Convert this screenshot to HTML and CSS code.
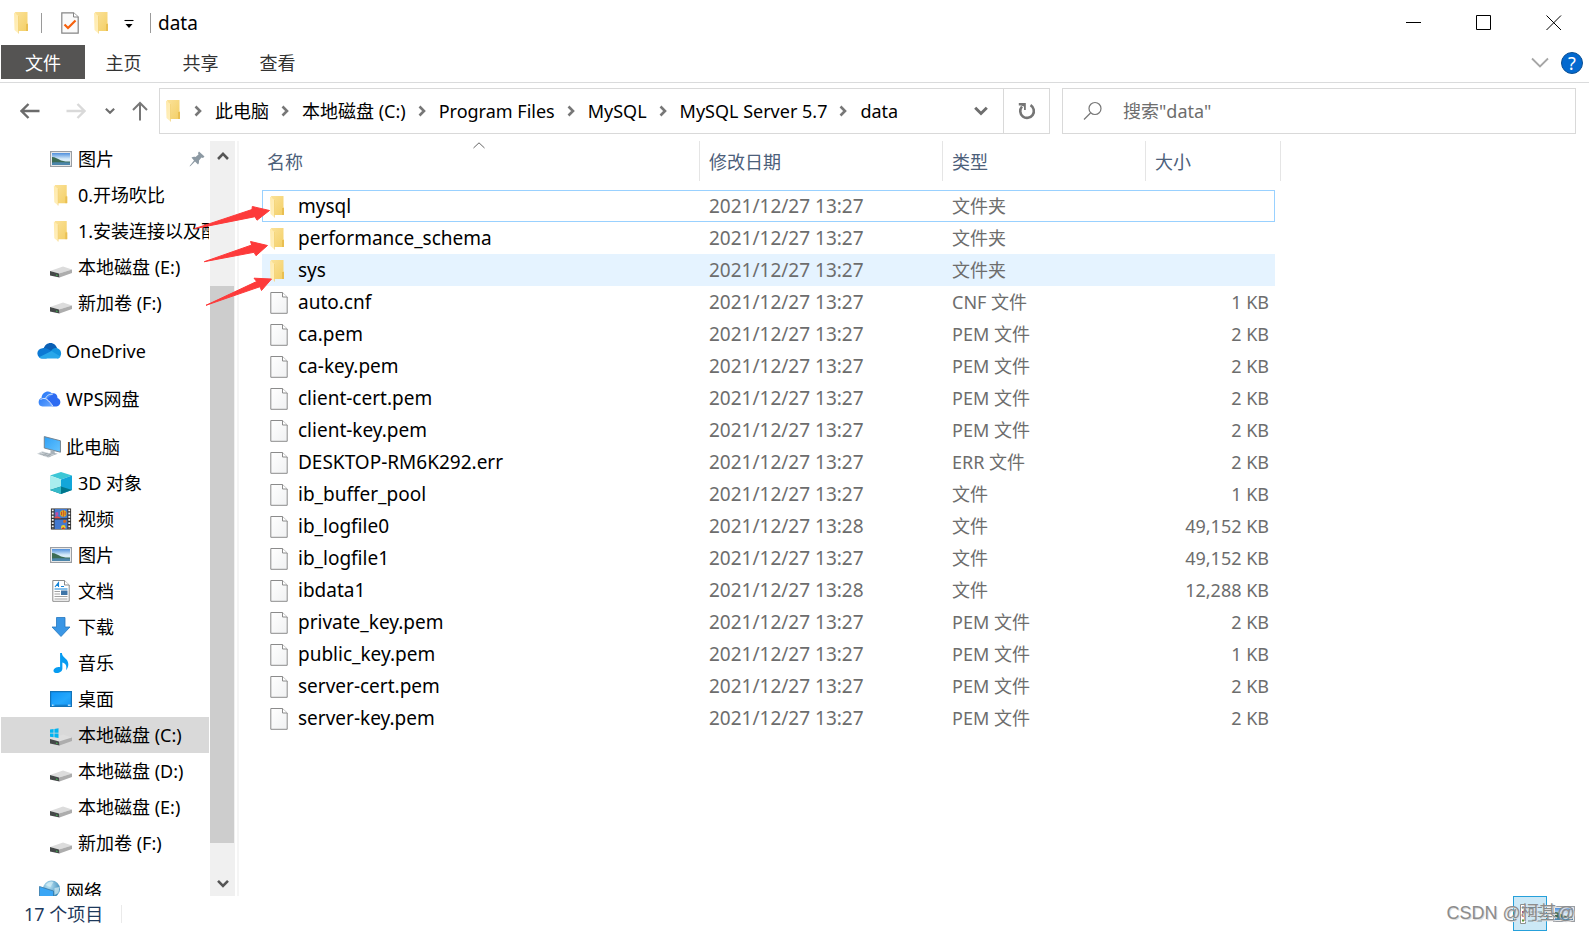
FILE: index.html
```html
<!DOCTYPE html>
<html lang="zh-CN">
<head>
<meta charset="utf-8">
<title>data</title>
<link rel="stylesheet" href="styles.css">
</head>
<body>
<svg class="defs" aria-hidden="true">
  <defs>
    <linearGradient id="gFolder" x1="0" x2="1" y1="0" y2="1"><stop offset="0" stop-color="#fbe299"/><stop offset="1" stop-color="#f3cf66"/></linearGradient>
    <linearGradient id="gFlap" x1="0" x2="1" y1="0" y2="1"><stop offset="0" stop-color="#ffe9a9"/><stop offset="1" stop-color="#fff0bf"/></linearGradient>
    <linearGradient id="gPage" x1="0" x2="1" y1="0" y2="1"><stop offset="0" stop-color="#ffffff"/><stop offset="1" stop-color="#f0f1f2"/></linearGradient>
    <linearGradient id="gSky" x1="0" x2="0" y1="0" y2="1"><stop offset="0" stop-color="#4f8fdc"/><stop offset="0.500" stop-color="#d8ecfa"/></linearGradient>
    <linearGradient id="gScreen" x1="0" x2="1" y1="0" y2="1"><stop offset="0" stop-color="#2ea0f5"/><stop offset="1" stop-color="#66c4ff"/></linearGradient>
    <linearGradient id="gDesk" x1="0" x2="1" y1="0" y2="1"><stop offset="0" stop-color="#0f93f7"/><stop offset="0.6" stop-color="#25a8fd"/><stop offset="1" stop-color="#1592f0"/></linearGradient>
    <linearGradient id="gWps" x1="0" x2="1" y1="0" y2="1"><stop offset="0" stop-color="#1a6ff5"/><stop offset="1" stop-color="#6aa8ff"/></linearGradient>
    <radialGradient id="gGlobe" cx="0.35" cy="0.3" r="0.8"><stop offset="0" stop-color="#bfe6f7"/><stop offset="1" stop-color="#2b7fb0"/></radialGradient>
  </defs>
  <symbol id="folder" viewBox="0 0 15 22">
    <path d="M1 0H13.500V11L14 12V19H4Z" fill="url(#gFolder)"/>
    <path d="M12 12h2v7h-2z" fill="#e9bf52"/>
    <path d="M0 0.500L4.500 4V21.500L0.500 18Z" fill="url(#gFlap)"/>
    <path d="M4.500 4V21.500" stroke="#f0cb67" stroke-width="0.600"/>
  </symbol>
  <symbol id="page" viewBox="0 0 18 22">
    <path d="M0.800 0.500H12.500L17.200 5V21.300H0.800Z" fill="url(#gPage)" stroke="#8b8b8b" stroke-width="1"/>
    <path d="M12.500 0.500V5H17.200" fill="#fff" stroke="#8b8b8b" stroke-width="1"/>
  </symbol>
  <symbol id="check" viewBox="0 0 18 22">
    <path d="M0.800 0.800H12.500L17.200 5V21.200H0.800Z" fill="#fafafa" stroke="#858585" stroke-width="1.200"/>
    <path d="M12.500 0.800V5H17.200" fill="#fff" stroke="#858585"/>
    <path d="M3.500 12.500L7 16L14.500 8.500" fill="none" stroke="#f5600c" stroke-width="2.200"/>
  </symbol>
  <symbol id="picture" viewBox="0 0 22 16">
    <path d="M0.600 0.600H21.400V15.400H0.600Z" fill="#fff" stroke="#9a9ea3" stroke-width="1.200"/>
    <path d="M2 2H20V14H2Z" fill="url(#gSky)"/>
    <path d="M2 6C5 6 8 8 11 9.500C14 10.500 17 10.500 20 10.500V12H2Z" fill="#3c6c55"/>
    <path d="M2 11.500C8 11 14 11.500 20 11.500V14H2Z" fill="#4c86ab"/>
  </symbol>
  <symbol id="drive" viewBox="0 0 22 12">
    <path d="M0 5L13 0.500L22 3.500L9 7.500Z" fill="#dcdcdc"/>
    <path d="M9 7.500L22 3.500V7L9.500 11.500Z" fill="#adadad"/>
    <path d="M0 5L9 7.500L9.500 11.500L0 9.500Z" fill="#444848"/>
    <path d="M6 8.500l1.500 0.400v1L6 9.500z" fill="#43c653"/>
  </symbol>
  <symbol id="cdrive" viewBox="0 0 22 18">
    <path d="M0 11L13 6.500L22 9.500L9 13.500Z" fill="#dedede"/>
    <path d="M9 13.500L22 9.500V13L9.500 17.500Z" fill="#adadad"/>
    <path d="M0 11L9 13.500L9.500 17.500L0 15.500Z" fill="#444848"/>
    <path d="M6 14.500l1.500 0.400v1L6 15.500z" fill="#43c653"/>
    <path d="M0 1.500L3.600 1V4.700H0ZM4.400 0.900L8.500 0.300V4.700H4.400ZM0 5.500H3.600V9.200L0 8.700ZM4.400 5.500H8.500V9.900L4.400 9.300Z" fill="#00b3f0"/>
  </symbol>
  <symbol id="onedrive" viewBox="0 0 24 16">
    <path d="M6 6C7 2 10 0 13 0C16.500 0 18.500 2.500 19.500 5L13 9Z" fill="#0a5fb4"/>
    <path d="M5 15.500A5 5 0 0 1 5 5.200C8 4.300 11 6 14 8L9 15.500Z" fill="#0c79d4"/>
    <path d="M13.500 8C15 5 18 4.500 20 5.300C24.500 7 25 13 20.500 15.500L12 12Z" fill="#1493df"/>
    <path d="M1.500 14.200L14 8L23 13.500C22 15 21 15.500 20 15.500H5C3.500 15.500 2.500 15.200 1.500 14.200Z" fill="#29a7ea"/>
  </symbol>
  <symbol id="wps" viewBox="0 0 24 16">
    <path d="M9 8L13 3C17 1 20 3.500 20 7C24 8 24 15 19 15.500H15Z" fill="#2d6bf2"/>
    <path d="M5 15.500C0 15.500 0 8 4 7C4.500 0 13 -1.500 15 3.500L9 8L15 15.500Z" fill="url(#gWps)"/>
    <path d="M3 8.500C8 5.500 11 9 15.500 15.300M8 7.500C9.500 4 12 3 15 3.500" fill="none" stroke="#e6f0ff" stroke-width="0.900"/>
  </symbol>
  <symbol id="pc" viewBox="0 0 24 21">
    <path d="M7 0.500L22.500 4.500V15.500L7 11.500Z" fill="url(#gScreen)" stroke="#70808c" stroke-width="0.900"/>
    <path d="M13 13.300l4 1v2l3 0.700-4 1.500-6-1.500 3-1z" fill="#a8b2ba"/>
    <path d="M0 17L5 14.500L17 18L11 20.800Z" fill="#d0d6da"/>
    <path d="M2.500 17L13 19.600M5 15.800L15 18.500M6 18.700l4-2M9.500 19.600l4-2" stroke="#8f999f" stroke-width="0.600"/>
  </symbol>
  <symbol id="cube" viewBox="0 0 22 22">
    <path d="M0 3.500L11 0L22 3.500L11 7.500Z" fill="#3cc7d6"/>
    <path d="M0 3.500L11 7.500V22L0 18Z" fill="#a9eeee"/>
    <path d="M11 7.500L22 3.500V18L11 22Z" fill="#12a6d9"/>
    <path d="M0 18L11 14.500L22 18L11 22Z" fill="#00778c"/>
    <path d="M0 18L11 14.500V22Z" fill="#35bac9"/>
  </symbol>
  <symbol id="video" viewBox="0 0 22 24">
    <path d="M0 0.500H22V23.500H0Z" fill="#303030"/>
    <path d="M4 1H18V11.300H4ZM4 12.500H18V23H4Z" fill="#4379cf"/>
    <path d="M2 1.500V23M20 1.500V23" stroke="#f4f4f4" stroke-width="2" stroke-dasharray="2 1.500"/>
    <path d="M5 4.500h3v3l-1.500 1.500-1.500-1.500z" fill="#c04ca0"/>
    <circle cx="13.500" cy="6" r="3.500" fill="#e0bf22"/><path d="M13.500 2.500v7M11.500 4v4M15.500 4v4" stroke="#c72c24" stroke-width="0.900"/>
    <path d="M4 9.500q4-1.500 7 1.800H4z" fill="#e84942"/><circle cx="15" cy="14.500" r="1.800" fill="#d26a20"/>
    <circle cx="13.500" cy="21" r="2.500" fill="#edce2b"/><path d="M11.500 23q2-4 4 0z" fill="#c83427"/>
  </symbol>
  <symbol id="doc" viewBox="0 0 18 22">
    <path d="M0.800 0.500H12.500L17.200 5V21.300H0.800Z" fill="#fff" stroke="#8b8b8b"/>
    <path d="M12.500 0.500V5H17.200" fill="#fff" stroke="#8b8b8b"/>
    <path d="M3 7L6.500 2.500V7M4 5.500H7M9 6.500H12M2.500 9H15.500" fill="none" stroke="#1383d8" stroke-width="1.100"/>
    <path d="M2.500 11.500H8M2.500 14H8M2.500 16.500H15.500M2.500 19H15.500" stroke="#a2a2a2"/>
    <path d="M9 10.500h6.500v4.500H9z" fill="#3e75a8"/>
  </symbol>
  <symbol id="down" viewBox="0 0 20 20"><path d="M5.500 0.500H14V10H19L10 19.500L1 10H5.500Z" fill="#3a96e5" stroke="#2377bf" stroke-width="0.800"/></symbol>
  <symbol id="music" viewBox="0 0 18 24"><path d="M8 1H10C10 6 17 7 17 13C17 16 16 18 14.500 20C16 14 13 12 10.500 11.500V18C10.500 21 7.500 23 4.500 23C1 23 0 20.500 1.500 18.500C3 16.500 6 15.800 8 16.500Z" fill="#079cf1"/></symbol>
  <symbol id="desk" viewBox="0 0 22 16"><path d="M0.600 0.600H21.400V15.400H0.600Z" fill="url(#gDesk)" stroke="#1373b9" stroke-width="1.200"/><path d="M2 14.200h1.500M18 14.200h2.500" stroke="#fff"/><path d="M5 14.200h12" stroke="#0d5fa0" stroke-width="0.600"/></symbol>
  <symbol id="net" viewBox="0 0 24 22">
    <circle cx="14" cy="9" r="8.500" fill="url(#gGlobe)"/><path d="M8 5q4-5 8-3l-3 5zM17 8l5-1-1 6-4 2z" fill="#d6eff5" opacity="0.700"/>
    <path d="M2 6.500L16 11V21L2 17Z" fill="#3aa6f5" stroke="#3377a6" stroke-width="0.800"/>
  </symbol>
  <symbol id="pin" viewBox="0 0 16 16"><path d="M10 0.500L15.500 5.500L14 7L12.500 6.500L10 9.500C10 11.500 10 12.500 9 13.500L6 10.500L1.500 15L0.500 15.500L1 14.500L5 9.500L2.500 6.500C4 5.500 5.500 5.500 6.500 6L9.500 3.500L9 2Z" fill="#8c99a3"/></symbol>
  <symbol id="chevR" viewBox="0 0 8 12"><path d="M1.500 1.500L6 6L1.500 10.500" fill="none" stroke="#777" stroke-width="2.600"/></symbol>
  <symbol id="chevD" viewBox="0 0 14 10"><path d="M1.200 1.800L7 7.500L12.800 1.800" fill="none" stroke="#6e6e6e" stroke-width="3"/></symbol>
</svg>

<div class="window">
  <header class="titlebar">
    <svg class="i-folder"><use href="#folder"/></svg>
    <span class="sep sep-a"></span>
    <button class="plain" aria-label="属性"><svg class="i-page"><use href="#check"/></svg></button>
    <button class="plain qa-folder" aria-label="新建文件夹"><svg class="i-folder"><use href="#folder"/></svg></button>
    <button class="plain qa-more" aria-label="自定义快速访问工具栏"><svg width="10" height="13" viewBox="0 0 10 13"><path d="M0.500 4.500H9.500" stroke="#000" stroke-width="1.100"/><path d="M1.500 8H8.500L5 12Z"/></svg></button>
    <span class="sep sep-b"></span>
    <h1 class="title">data</h1>
    <div class="winbtns">
      <button aria-label="最小化"><svg width="16" height="16"><path d="M0 7.500H15" stroke="#000"/></svg></button>
      <button aria-label="最大化"><svg width="16" height="16"><path d="M0.500 0.500H14.500V14.500H0.500Z" fill="none" stroke="#000"/></svg></button>
      <button aria-label="关闭"><svg width="16" height="16"><path d="M0.500 0.500L15 15M15 0.500L0.500 15" stroke="#000"/></svg></button>
    </div>
  </header>

  <div class="ribbon">
    <button class="tab tab-file">文件</button>
    <button class="tab">主页</button>
    <button class="tab">共享</button>
    <button class="tab">查看</button>
    <div class="ribbon-end">
      <button class="plain" aria-label="展开功能区"><svg width="18" height="12" viewBox="0 0 18 12"><path d="M1 1.500L9 9.500L17 1.500" fill="none" stroke="#a6a6a6" stroke-width="1.800"/></svg></button>
      <button class="help" aria-label="帮助">?</button>
    </div>
  </div>

  <div class="navrow">
    <div class="navbtns">
      <button class="plain" aria-label="后退"><svg width="20" height="16"><path d="M19.500 8H2M8.500 1L1.500 8L8.500 15" fill="none" stroke="#6b6b6b" stroke-width="2.400"/></svg></button>
      <button class="plain nb-fwd" aria-label="前进"><svg width="20" height="16"><path d="M0.500 8H18M11.500 1L18.500 8L11.500 15" fill="none" stroke="#d9d9d9" stroke-width="2.400"/></svg></button>
      <button class="plain nb-hist" aria-label="最近浏览的位置"><svg width="10" height="8" viewBox="0 0 14 10"><use href="#chevD"/></svg></button>
      <button class="plain nb-up" aria-label="上移"><svg width="16" height="20"><path d="M8 19.500V2M1 9L8 2L15 9" fill="none" stroke="#777" stroke-width="2"/></svg></button>
    </div>
    <div class="address">
      <svg class="i-folder"><use href="#folder"/></svg>
      <svg class="crumb-sep first"><use href="#chevR"/></svg><a href="#" class="crumb">此电脑</a>
      <svg class="crumb-sep"><use href="#chevR"/></svg><a href="#" class="crumb">本地磁盘 (C:)</a>
      <svg class="crumb-sep"><use href="#chevR"/></svg><a href="#" class="crumb">Program Files</a>
      <svg class="crumb-sep"><use href="#chevR"/></svg><a href="#" class="crumb">MySQL</a>
      <svg class="crumb-sep"><use href="#chevR"/></svg><a href="#" class="crumb">MySQL Server 5.7</a>
      <svg class="crumb-sep"><use href="#chevR"/></svg><a href="#" class="crumb">data</a>
      <button class="plain addr-drop" aria-label="以前的位置"><svg width="14" height="10"><use href="#chevD"/></svg></button>
      <button class="refresh" aria-label="刷新"><svg width="18" height="18" viewBox="0 0 18 18"><path d="M12.500 3.200A6.800 6.800 0 1 1 4 4.500" fill="none" stroke="#757575" stroke-width="2.600"/><path d="M0.800 1H7.800V8H6V4.500L3 3.500H0.800Z" fill="#757575"/></svg></button>
    </div>
    <label class="search">
      <svg width="20" height="20"><circle cx="12" cy="7.500" r="6" fill="none" stroke="#777" stroke-width="1.200"/><path d="M7.500 12L1 18.500" stroke="#777" stroke-width="1.300"/></svg>
      <input type="text" aria-label="搜索" placeholder='搜索"data"'>
    </label>
  </div>

  <div class="body">
    <nav class="side">
      <ul class="tree">
        <li><a href="#" class="sub"><svg class="t-pic"><use href="#picture"/></svg>图片<svg class="pin"><use href="#pin"/></svg></a></li>
        <li><a href="#" class="sub"><svg class="t-folder"><use href="#folder"/></svg>0.开场吹比</a></li>
        <li><a href="#" class="sub"><svg class="t-folder"><use href="#folder"/></svg>1.安装连接以及配置</a></li>
        <li><a href="#" class="sub"><svg class="t-drive"><use href="#drive"/></svg>本地磁盘 (E:)</a></li>
        <li><a href="#" class="sub"><svg class="t-drive"><use href="#drive"/></svg>新加卷 (F:)</a></li>
        <li class="group"><a href="#"><svg class="t-cloud"><use href="#onedrive"/></svg>OneDrive</a></li>
        <li class="group"><a href="#"><svg class="t-cloud"><use href="#wps"/></svg>WPS网盘</a></li>
        <li class="group"><a href="#"><svg class="t-pc"><use href="#pc"/></svg>此电脑</a></li>
        <li><a href="#" class="sub"><svg class="t-sq"><use href="#cube"/></svg>3D 对象</a></li>
        <li><a href="#" class="sub"><svg class="t-sq"><use href="#video"/></svg>视频</a></li>
        <li><a href="#" class="sub"><svg class="t-pic"><use href="#picture"/></svg>图片</a></li>
        <li><a href="#" class="sub"><svg class="t-sq"><use href="#doc"/></svg>文档</a></li>
        <li><a href="#" class="sub"><svg class="t-down"><use href="#down"/></svg>下载</a></li>
        <li><a href="#" class="sub"><svg class="t-sq"><use href="#music"/></svg>音乐</a></li>
        <li><a href="#" class="sub"><svg class="t-pic"><use href="#desk"/></svg>桌面</a></li>
        <li><a href="#" class="sub current"><svg class="t-cdrive"><use href="#cdrive"/></svg>本地磁盘 (C:)</a></li>
        <li><a href="#" class="sub"><svg class="t-drive"><use href="#drive"/></svg>本地磁盘 (D:)</a></li>
        <li><a href="#" class="sub"><svg class="t-drive"><use href="#drive"/></svg>本地磁盘 (E:)</a></li>
        <li><a href="#" class="sub"><svg class="t-drive"><use href="#drive"/></svg>新加卷 (F:)</a></li>
        <li class="group"><a href="#"><svg class="t-pc"><use href="#net"/></svg>网络</a></li>
      </ul>
      <div class="scroll">
        <button aria-label="向上滚动"><svg width="12" height="10" viewBox="0 0 14 11"><path d="M1.200 9L7 3L12.800 9" fill="none" stroke="#555" stroke-width="3"/></svg></button>
        <div class="track"><div class="thumb"></div></div>
        <button aria-label="向下滚动"><svg width="12" height="10" viewBox="0 0 14 11"><path d="M1.200 3L7 9L12.800 3" fill="none" stroke="#555" stroke-width="3"/></svg></button>
      </div>
    </nav>

    <main class="files">
      <table class="list">
        <colgroup><col class="c-name"><col class="c-date"><col class="c-type"><col class="c-size"><col class="c-end"></colgroup>
        <thead><tr>
          <th scope="col"><button class="colhead">名称<svg class="sort" width="12" height="7"><path d="M0.500 6L6 0.800L11.500 6" fill="none" stroke="#666"/></svg></button></th>
          <th scope="col"><button class="colhead">修改日期</button></th>
          <th scope="col"><button class="colhead">类型</button></th>
          <th scope="col" colspan="2"><button class="colhead">大小</button></th>
        </tr></thead>
        <tbody>
          <tr class="focused"><td><svg class="f-folder"><use href="#folder"/></svg>mysql</td><td class="num">2021/12/27 13:27</td><td>文件夹</td><td></td></tr>
          <tr><td><svg class="f-folder"><use href="#folder"/></svg>performance_schema</td><td class="num">2021/12/27 13:27</td><td>文件夹</td><td></td></tr>
          <tr class="hover"><td><svg class="f-folder"><use href="#folder"/></svg>sys</td><td class="num">2021/12/27 13:27</td><td>文件夹</td><td></td></tr>
          <tr><td><svg class="f-page"><use href="#page"/></svg>auto.cnf</td><td class="num">2021/12/27 13:27</td><td>CNF 文件</td><td>1 KB</td></tr>
          <tr><td><svg class="f-page"><use href="#page"/></svg>ca.pem</td><td class="num">2021/12/27 13:27</td><td>PEM 文件</td><td>2 KB</td></tr>
          <tr><td><svg class="f-page"><use href="#page"/></svg>ca-key.pem</td><td class="num">2021/12/27 13:27</td><td>PEM 文件</td><td>2 KB</td></tr>
          <tr><td><svg class="f-page"><use href="#page"/></svg>client-cert.pem</td><td class="num">2021/12/27 13:27</td><td>PEM 文件</td><td>2 KB</td></tr>
          <tr><td><svg class="f-page"><use href="#page"/></svg>client-key.pem</td><td class="num">2021/12/27 13:27</td><td>PEM 文件</td><td>2 KB</td></tr>
          <tr><td><svg class="f-page"><use href="#page"/></svg>DESKTOP-RM6K292.err</td><td class="num">2021/12/27 13:27</td><td>ERR 文件</td><td>2 KB</td></tr>
          <tr><td><svg class="f-page"><use href="#page"/></svg>ib_buffer_pool</td><td class="num">2021/12/27 13:27</td><td>文件</td><td>1 KB</td></tr>
          <tr><td><svg class="f-page"><use href="#page"/></svg>ib_logfile0</td><td class="num">2021/12/27 13:28</td><td>文件</td><td>49,152 KB</td></tr>
          <tr><td><svg class="f-page"><use href="#page"/></svg>ib_logfile1</td><td class="num">2021/12/27 13:27</td><td>文件</td><td>49,152 KB</td></tr>
          <tr><td><svg class="f-page"><use href="#page"/></svg>ibdata1</td><td class="num">2021/12/27 13:28</td><td>文件</td><td>12,288 KB</td></tr>
          <tr><td><svg class="f-page"><use href="#page"/></svg>private_key.pem</td><td class="num">2021/12/27 13:27</td><td>PEM 文件</td><td>2 KB</td></tr>
          <tr><td><svg class="f-page"><use href="#page"/></svg>public_key.pem</td><td class="num">2021/12/27 13:27</td><td>PEM 文件</td><td>1 KB</td></tr>
          <tr><td><svg class="f-page"><use href="#page"/></svg>server-cert.pem</td><td class="num">2021/12/27 13:27</td><td>PEM 文件</td><td>2 KB</td></tr>
          <tr><td><svg class="f-page"><use href="#page"/></svg>server-key.pem</td><td class="num">2021/12/27 13:27</td><td>PEM 文件</td><td>2 KB</td></tr>
        </tbody>
      </table>
    </main>

    <svg class="arrows" width="90" height="120" viewBox="190 200 90 120" aria-hidden="true">
      <g fill="#fd3a3a" stroke="#fd3a3a" stroke-width="1" stroke-linejoin="round">
        <path d="M194.500 228.700L252 209.500L252.300 206.500L269.500 210.500L257 220.200L255 216.700Z"/>
        <path d="M204.300 261.700L251.700 245L250.500 241.500L267.500 245.500L256 255.700L254 252.300Z"/>
        <path d="M206 305.300L256.700 281.500L254 278.200L271.500 279L261.500 290.500L260 286.700Z"/>
      </g>
    </svg>
  </div>

  <footer class="status">
    <span class="count">17 个项目</span>
    <div class="views">
      <button class="view on" aria-label="详细信息"><svg width="32" height="22" viewBox="0 0 32 22"><path d="M6.500 1.500h5v19h-5z" fill="#fff" stroke="#8d8d8d"/><path d="M8 3.500h2v2H8z" fill="#4778b6"/><path d="M8 8h2v2H8z" fill="#a84e72"/><path d="M8 12h2v2H8z" fill="#cf3030"/><path d="M8 16.500h2v2H8z" fill="#56952f"/><path d="M14 4.500h14M14 9h14M14 13.500h14M14 18h14" stroke="#7d8990"/></svg></button>
      <button class="view" aria-label="大图标"><svg width="22" height="16"><use href="#picture"/></svg></button>
    </div>
    <span class="mark">CSDN @柯基@</span>
  </footer>
</div>
</body>
</html>
```
FILE: styles.css
```css
* { box-sizing: border-box; }

body {
  margin: 0;
  background: #fff;
  color: #000;
  font: 18px/24px "Noto Sans", "Noto Sans CJK SC", sans-serif;
}

button, input { font: inherit; color: inherit; }
button { padding: 0; border: 0; background: none; }
a { color: inherit; text-decoration: none; }
svg { display: block; flex: none; }

.defs { position: absolute; width: 0; height: 0; }
.plain { display: flex; align-items: center; justify-content: center; }

.window { display: flex; flex-direction: column; height: 100vh; }

.i-folder { width: 15px; height: 22px; }
.i-page { width: 18px; height: 22px; }

/* title bar */
.titlebar { display: flex; align-items: center; height: 45px; padding-left: 14px; }
.sep { width: 1px; height: 20px; background: #9a9a9a; }
.sep-a { margin: 0 19px 0 12px; }
.qa-folder { margin-left: 15px; }
.qa-more { margin-left: 15px; }
.sep-b { margin: 0 7px 0 16px; }
.title { margin: 0; font-size: 19px; font-weight: 400; }
.winbtns { display: flex; margin-left: auto; }
.winbtns button { display: flex; align-items: center; justify-content: center; width: 70px; height: 45px; }

/* ribbon */
.ribbon { display: flex; align-items: flex-start; height: 38px; padding-left: 1px; border-bottom: 1px solid #dadbdc; }
.tab { width: 77px; height: 34px; padding-top: 1px; color: #333; }
.tab-file { width: 84px; background: #555453; color: #fff; }
.ribbon-end { display: flex; align-items: center; gap: 12px; height: 36px; margin-left: auto; padding-right: 6px; }
.help { width: 22px; height: 22px; border: 1px solid #0b4f93; border-radius: 50%; background: #0369cf; color: #fff; font-size: 18px; line-height: 20px; }

/* navigation row */
.navrow { display: flex; align-items: center; padding: 5px 13px 7px 20px; }
.navbtns { display: flex; align-items: center; width: 139px; }
.nb-fwd { margin-left: 26px; }
.nb-hist { margin-left: 19px; }
.nb-up { margin-left: 17px; }
.address { display: flex; flex: 26 1 891px; align-items: center; height: 46px; padding-left: 6px; border: 1px solid #d9d9d9; }
.crumb { white-space: nowrap; }
.crumb-sep { width: 8px; height: 12px; margin: 0 13px 0 12px; }
.first { margin-left: 13px; }
.addr-drop { width: 44px; height: 44px; margin-left: auto; }
.refresh { display: flex; align-items: center; justify-content: center; width: 46px; height: 44px; border-left: 1px solid #d9d9d9; }
.search { display: flex; flex: 15 1 514px; align-items: center; gap: 20px; height: 46px; margin-left: 12px; padding-left: 20px; border: 1px solid #d9d9d9; }
.search input { flex: 1; min-width: 0; padding: 0; border: 0; outline: 0; background: none; }
.search input::placeholder { color: #6d6d6d; opacity: 1; }

/* body */
.body { position: relative; display: flex; flex: 1; min-height: 0; }
.side { display: flex; width: 239px; border-right: 2px solid #f5f5f5; }
.tree { width: 209px; margin: 0 1px 0 0; padding: 0 0 0 1px; overflow: hidden; list-style: none; }
.tree a { display: flex; align-items: center; gap: 4px; height: 36px; padding-left: 36px; white-space: nowrap; }
.tree .sub { gap: 6px; padding-left: 49px; }
.group { margin-top: 12px; }
.tree .current { background: #d9d9d9; }
.t-pic { width: 22px; height: 16px; }
.t-folder { width: 22px; height: 21px; }
.t-drive { width: 22px; height: 12px; margin-top: 9px; }
.t-cdrive { width: 22px; height: 18px; margin-top: 4px; }
.t-cloud { width: 25px; height: 16px; }
.t-pc { width: 25px; height: 22px; }
.t-sq { width: 22px; height: 22px; }
.t-down { width: 22px; height: 20px; }
.tree .pin { width: 16px; height: 16px; margin: 0 4px 0 auto; }

.scroll { display: flex; flex-direction: column; width: 25px; background: #f0f0f0; }
.scroll button { display: flex; align-items: center; justify-content: center; height: 28px; padding-top: 1px; }
.track { display: flex; flex: 1; flex-direction: column; padding-right: 1px; }
.track::before { content: ""; flex: 117; }
.track::after { content: ""; flex: 25; }
.thumb { flex: 557; background: #cdcdcd; }

/* file list */
.files { flex: 1; min-width: 0; padding-left: 23px; overflow: hidden; }
.list { width: 1019px; border-spacing: 0; table-layout: fixed; }
.c-name { width: 438px; }
.c-date { width: 243px; }
.c-type { width: 203px; }
.c-size { width: 129px; }
.c-end { width: 6px; }
.list th { padding: 0 0 9px; font-weight: 400; }
.colhead { position: relative; display: block; width: 100%; height: 40px; padding: 1px 0 0 9px; border-right: 1px solid #e5e5e5; color: #4c607a; text-align: left; }
th:first-child .colhead { padding-left: 5px; }
.sort { position: absolute; top: 1px; left: calc(50% - 8px); }
.list td { height: 32px; padding: 0 0 0 9px; border: 0 solid #99d1ff; color: #6d6d6d; white-space: nowrap; }
.list td:first-child { padding-left: 8px; color: #000; font-size: 19px; }
.list .num { font-size: 19px; }
.list td:last-child { padding: 0 6px 0 0; text-align: right; }
.list .focused td { border-width: 1px 0; }
.list .focused td:first-child { padding-left: 7px; border-left-width: 1px; }
.list .focused td:last-child { border-right-width: 1px; }
.hover td { background: #e5f3ff; }
.f-folder, .f-page { display: inline-block; height: 22px; vertical-align: -5px; }
.f-folder { width: 15px; margin: 0 13px 0 0; }
.f-page { width: 18px; margin: 0 10px 0 0; }

.arrows { position: absolute; top: 59px; left: 190px; }

/* status bar */
.status { position: relative; display: flex; height: 36px; padding-left: 24px; color: #1e395b; }
.count { align-self: center; padding-right: 18px; border-right: 1px solid #eaeaea; line-height: 18px; }
.views { display: flex; margin-left: auto; padding-right: 8px; }
.view { display: flex; align-items: center; justify-content: center; width: 34px; height: 35px; }
.on { border: 1px solid #26a0da; background: #cce8f6; }
.mark { position: absolute; top: 5px; right: 14px; color: #8c8c8c; font-family: "Liberation Sans", "Noto Sans CJK SC", sans-serif; font-size: 18px; text-shadow: 1px 1px 0 #ddd; }
```
